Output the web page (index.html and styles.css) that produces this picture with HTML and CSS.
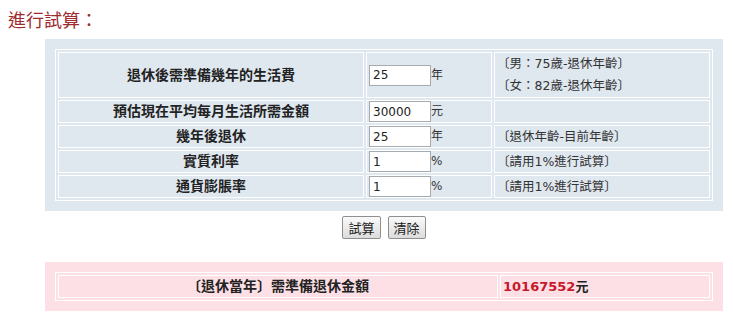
FILE: index.html
```html
<!DOCTYPE html>
<html lang="zh-Hant">
<head>
    <meta charset="UTF-8">
    <title>退休金試算</title>
    <link rel="stylesheet" href="styles.css">
</head>
<body>
    <h2 class="title">進行試算：</h2>

    <div class="wrap">
        <!-- input panel -->
        <div class="panel panel-blue">
            <table class="calc">
                <tr class="tall">
                    <th>退休後需準備幾年的生活費</th>
                    <td class="field"><input type="text" id="years" value="25">年</td>
                    <td class="note">〔男：75歲-退休年齡〕<br>〔女：82歲-退休年齡〕</td>
                </tr>
                <tr>
                    <th>預估現在平均每月生活所需金額</th>
                    <td class="field"><input type="text" id="monthly" value="30000">元</td>
                    <td class="note"></td>
                </tr>
                <tr>
                    <th>幾年後退休</th>
                    <td class="field"><input type="text" id="retire" value="25">年</td>
                    <td class="note">〔退休年齡-目前年齡〕</td>
                </tr>
                <tr>
                    <th>實質利率</th>
                    <td class="field"><input type="text" id="rate" value="1">%</td>
                    <td class="note">〔請用1%進行試算〕</td>
                </tr>
                <tr>
                    <th>通貨膨脹率</th>
                    <td class="field"><input type="text" id="inflation" value="1">%</td>
                    <td class="note">〔請用1%進行試算〕</td>
                </tr>
            </table>
        </div>

        <div class="actions">
            <button id="calc">試算</button>
            <button id="clear">清除</button>
        </div>

        <!-- result panel -->
        <div class="panel panel-pink">
            <table class="calc result">
                <tr>
                    <th>〔退休當年〕需準備退休金額</th>
                    <td class="amount"><span id="total">10167552</span>元</td>
                </tr>
            </table>
        </div>
    </div>

    <script>
        function getValue(id) {
            return parseFloat(document.getElementById(id).value) || 0;
        }

        function calculate() {
            const years = getValue("years");
            const monthly = getValue("monthly");
            const retire = getValue("retire");
            const rate = getValue("rate") / 100;
            const inflation = getValue("inflation") / 100;

            // monthly cost at retirement, then present value of the yearly needs
            const yearly = monthly * 12 * Math.pow(1 + inflation, retire);
            let total = 0;
            for (let i = 0; i < years; i++) {
                total += yearly / Math.pow(1 + rate, i);
            }
            document.getElementById("total").textContent = Math.round(total);
        }

        document.getElementById("calc").addEventListener("click", calculate);
        document.getElementById("clear").addEventListener("click", () => {
            ["years", "monthly", "retire", "rate", "inflation"].forEach((id) => {
                document.getElementById(id).value = "";
            });
            document.getElementById("total").textContent = "";
        });
    </script>
</body>
</html>
```

FILE: styles.css
```css
body {
    margin: 8px;
    font-family: "DejaVu Sans", "Noto Sans CJK TC", sans-serif;
    font-size: 12px;
    color: #333333;
    background-color: #ffffff;
}

.title {
    margin: 0 0 6px 0;
    font-size: 18px;
    font-weight: normal;
    line-height: 25px;
    color: #9e2b2e;
}

.wrap {
    width: 678px;
    margin-left: 37px;
}

.panel {
    padding: 10px;
}

.panel-blue {
    background-color: #dfe7ef;
}

.panel-pink {
    margin-top: 23px;
    background-color: #fde0e6;
}

.calc {
    width: 100%;
    border: 1px solid #ffffff;
    border-spacing: 2px;
}

.calc th,
.calc td {
    border: 1px solid #ffffff;
    padding: 0 2px;
    height: 21px;
    line-height: 21px;
    vertical-align: middle;
}

.calc th {
    width: 300px;
    font-size: 14px;
    font-weight: bold;
    color: #222222;
    text-align: center;
}

.calc .tall th,
.calc .tall td {
    height: 43px;
}

.field {
    width: 120px;
    text-align: left;
}

.field input {
    width: 62px;
    height: 21px;
    box-sizing: border-box;
    margin: 0;
    padding: 0 3px;
    border: 1px solid #a6abb0;
    background-color: #ffffff;
    font-family: "DejaVu Sans", sans-serif;
    font-size: 12px;
    color: #222222;
    vertical-align: middle;
}

.note {
    font-size: 12.5px;
}

.calc .tall .note {
    line-height: 22px;
    padding-top: 0;
}

.actions {
    display: flex;
    justify-content: center;
    gap: 7px;
    margin-top: 5px;
}

.actions button {
    height: 23px;
    padding: 0 5px;
    border: 1px solid #8f8f8f;
    border-radius: 2px;
    background: linear-gradient(#fafafa, #dcdcdc);
    font-family: "Noto Sans CJK TC", sans-serif;
    font-size: 13px;
    color: #222222;
    cursor: pointer;
}

.result th {
    width: 434px;
}

.amount {
    padding-left: 4px;
    font-size: 13px;
    font-weight: bold;
    color: #222222;
}

.amount span {
    color: #c8182b;
}
```
